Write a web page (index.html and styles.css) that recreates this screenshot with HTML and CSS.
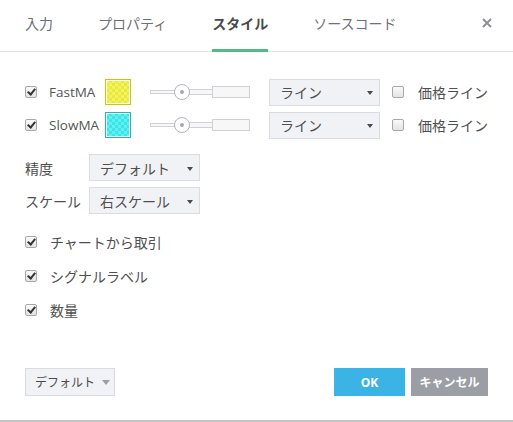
FILE: index.html
```html
<!DOCTYPE html>
<html lang="ja">
<head>
<meta charset="utf-8">
<link rel="stylesheet" href="styles.css">
</head>
<body>
<div class="dialog">
  <div class="tabs">
    <div class="tab">入力</div>
    <div class="tab">プロパティ</div>
    <div class="tab active">スタイル</div>
    <div class="tab">ソースコード</div>
    <div class="close">
      <svg width="10" height="10" viewBox="0 0 10 10"><path d="M1 1L9 9M9 1L1 9" stroke="#8c8f96" stroke-width="2"/></svg>
    </div>
  </div>

  <div class="content">
    <div class="plot-row">
      <span class="cb checked"></span>
      <span class="plot-name">FastMA</span>
      <span class="swatch yellow"></span>
      <span class="slider"><span class="tr-left"></span><span class="knob"></span><span class="tr-mid"></span><span class="tr-right"></span></span>
      <span class="select wide"><span>ライン</span><span class="caret"></span></span>
      <span class="cb"></span>
      <span class="price-label">価格ライン</span>
    </div>
    <div class="plot-row">
      <span class="cb checked"></span>
      <span class="plot-name">SlowMA</span>
      <span class="swatch cyan"></span>
      <span class="slider"><span class="tr-left"></span><span class="knob"></span><span class="tr-mid"></span><span class="tr-right"></span></span>
      <span class="select wide"><span>ライン</span><span class="caret"></span></span>
      <span class="cb"></span>
      <span class="price-label">価格ライン</span>
    </div>

    <div class="opts">
      <div class="opt-row">
        <span class="opt-label">精度</span>
        <span class="select"><span>デフォルト</span><span class="caret"></span></span>
      </div>
      <div class="opt-row">
        <span class="opt-label">スケール</span>
        <span class="select"><span>右スケール</span><span class="caret"></span></span>
      </div>
    </div>

    <div class="checks">
      <div class="check-row"><span class="cb checked"></span><span>チャートから取引</span></div>
      <div class="check-row"><span class="cb checked"></span><span>シグナルラベル</span></div>
      <div class="check-row"><span class="cb checked"></span><span>数量</span></div>
    </div>
  </div>

  <div class="footer">
    <div class="defaults">デフォルト<span class="caret light"></span></div>
    <div class="buttons">
      <div class="btn ok">OK</div>
      <div class="btn cancel">キャンセル</div>
    </div>
  </div>
</div>
</body>
</html>
```

FILE: styles.css
```css
* { box-sizing: border-box; }
html, body { margin: 0; padding: 0; background: #fff; }
body {
  font-family: "Open Sans", "Noto Sans CJK JP", sans-serif;
  font-size: 14px;
  color: #4f4f4f;
}
.dialog {
  width: 513px;
  height: 422px;
  border-bottom: 2px solid #c3c3c3;
  position: relative;
  display: flex;
  flex-direction: column;
}
.tabs {
  height: 52px;
  border-bottom: 1px solid #e0e3eb;
  display: flex;
  align-items: stretch;
  padding-left: 25px;
  gap: 45px;
}
.tab {
  color: #6d7079;
  font-size: 14px;
  line-height: 47px;
  border-bottom: 3px solid transparent;
  margin-bottom: -1px;
}
.tab.active {
  color: #4a4a4a;
  font-weight: bold;
  border-bottom-color: #53b987;
}
.close {
  margin-left: auto;
  width: 40px;
  display: flex;
  align-items: center;
  justify-content: center;
  padding-bottom: 6px;
  padding-right: 12px;
}
.content {
  padding: 27px 0 0 25px;
  flex: 1;
}
.plot-row {
  display: flex;
  align-items: center;
  height: 26px;
  margin-bottom: 7px;
}
.cb {
  width: 12px;
  height: 12px;
  border: 1px solid #a8a8a8;
  border-radius: 2px;
  background: linear-gradient(#fafafa, #e3e3e3);
  position: relative;
  flex: none;
}
.cb.checked::after {
  content: "";
  position: absolute;
  left: 3px;
  top: 0px;
  width: 3px;
  height: 6px;
  border: solid #333;
  border-width: 0 2px 2px 0;
  transform: rotate(40deg);
}
.plot-name {
  margin-left: 12px;
  width: 56px;
  color: #555;
  font-size: 13.5px;
}
.swatch {
  width: 26px;
  height: 26px;
  border: 1px solid;
  box-shadow: inset 0 0 0 1px #fff;
  background-size: 6px 6px;
  background-position: 0 0, 3px 3px;
}
.swatch.yellow {
  border-color: #c9c900;
  background-color: #f4f45a;
  background-image:
    linear-gradient(45deg, #e8e844 25%, transparent 25%, transparent 75%, #e8e844 75%),
    linear-gradient(45deg, #e8e844 25%, transparent 25%, transparent 75%, #e8e844 75%);
}
.swatch.cyan {
  border-color: #19b8c2;
  background-color: #5af2f2;
  background-image:
    linear-gradient(45deg, #40e2e8 25%, transparent 25%, transparent 75%, #40e2e8 75%),
    linear-gradient(45deg, #40e2e8 25%, transparent 25%, transparent 75%, #40e2e8 75%);
}
.slider {
  margin-left: 19px;
  width: 100px;
  height: 18px;
  display: flex;
  align-items: center;
  position: relative;
}
.tr-left {
  width: 25px;
  height: 4px;
  border: 1px solid #cfd1d6;
  border-right: none;
  background: #f7f7f7;
}
.knob {
  width: 16px;
  height: 16px;
  border: 1px solid #b1b4bb;
  border-radius: 50%;
  background: #fff;
  position: relative;
  margin: 0 -1px;
}
.knob::after {
  content: "";
  position: absolute;
  left: 5px;
  top: 5px;
  width: 4px;
  height: 4px;
  border-radius: 50%;
  background: #a5a8ae;
}
.tr-mid {
  width: 23px;
  height: 6px;
  border: 1px solid #cfd1d6;
  border-left: none;
  border-right: none;
  background: #f7f7f7;
}
.tr-right {
  flex: 1;
  height: 12px;
  border: 1px solid #cfd1d6;
  background: #f7f7f7;
}
.select {
  display: flex;
  align-items: center;
  justify-content: space-between;
  width: 111px;
  height: 27px;
  padding: 0 6px 0 10px;
  background: #f1f2f6;
  border: 1px solid #dadce2;
  color: #4f4f4f;
}
.select.wide { margin-left: 19px; }
.caret {
  width: 0;
  height: 0;
  border-left: 3.5px solid transparent;
  border-right: 3.5px solid transparent;
  border-top: 4px solid #4a4a4a;
  margin-top: 2px;
}
.plot-row .cb:not(:first-child) { margin-left: 12px; }
.price-label { margin-left: 14px; }
.opts {
  margin-top: 16px;
  display: flex;
  flex-direction: column;
  gap: 6px;
}
.opt-row {
  display: flex;
  align-items: center;
}
.opt-label { width: 64px; }
.checks {
  margin-top: 18px;
  display: flex;
  flex-direction: column;
  gap: 14px;
}
.check-row {
  display: flex;
  align-items: center;
  gap: 13px;
  height: 20px;
}
.footer {
  display: flex;
  justify-content: space-between;
  align-items: center;
  padding: 0 25px 24px 25px;
}
.defaults {
  width: 90px;
  height: 28px;
  border: 1px solid #d9dbe0;
  background: #f1f2f6;
  font-size: 12px;
  display: flex;
  align-items: center;
  padding-left: 9px;
  gap: 7px;
  color: #4a4a4a;
}
.caret.light {
  border-top-color: #9c9ea5;
  border-left-width: 4px;
  border-right-width: 4px;
  border-top-width: 5px;
  margin-top: 1px;
}
.buttons { display: flex; gap: 6px; }
.btn {
  height: 28px;
  display: flex;
  align-items: center;
  justify-content: center;
  color: #fff;
  font-weight: bold;
  font-size: 12px;
}
.btn.ok { width: 71px; background: #3bb3e4; }
.btn.cancel { width: 77px; background: #9b9ea5; }
```
